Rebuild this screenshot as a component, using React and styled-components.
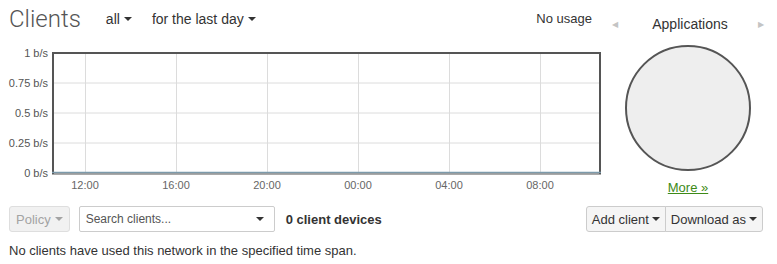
import React from 'react'
import styled, { createGlobalStyle } from 'styled-components'

const GlobalStyle = createGlobalStyle`
  body {
    margin: 0;
    background: #fff;
    font-family: "Liberation Sans", Arial, sans-serif;
    color: #333;
  }
`

const yTicks = [
  { label: '1 b/s', y: 53 },
  { label: '0.75 b/s', y: 83 },
  { label: '0.5 b/s', y: 113 },
  { label: '0.25 b/s', y: 143 },
  { label: '0 b/s', y: 173 },
]
const xTicks = [
  { label: '12:00', x: 85 },
  { label: '16:00', x: 176 },
  { label: '20:00', x: 267 },
  { label: '00:00', x: 358 },
  { label: '04:00', x: 449 },
  { label: '08:00', x: 540 },
]

function UsageChart() {
  // drawn in page coordinates, shifted up by the svg's top offset
  return (
    <ChartSvg width="605" height="158" viewBox="0 40 605 158">
      {yTicks.slice(1, 4).map(t => (
        <line key={t.label} x1="54" x2="600" y1={t.y} y2={t.y} stroke="#dcdcdc" strokeWidth="1" />
      ))}
      {xTicks.map(t => (
        <line key={t.label} x1={t.x + 0.5} x2={t.x + 0.5} y1="53" y2="173" stroke="#dcdcdc" strokeWidth="1" />
      ))}
      <path d="M53 174 L53 53 L600 53 L600 174" fill="none" stroke="#555" strokeWidth="2" />
      <line x1="52" x2="601" y1="172.5" y2="172.5" stroke="#7c9aab" strokeWidth="1.6" />
      <line x1="52" x2="601" y1="174" y2="174" stroke="#555" strokeWidth="1" />
      {yTicks.map(t => (
        <text key={t.label} x="48" y={t.y + 4} textAnchor="end" fontSize="11" fill="#555">{t.label}</text>
      ))}
      {xTicks.map(t => (
        <text key={t.label} x={t.x} y="189" textAnchor="middle" fontSize="11" fill="#666">{t.label}</text>
      ))}
    </ChartSvg>
  )
}

export default function App() {
  return (
    <Page>
      <GlobalStyle />
      <Top>
        <Main>
          <Header>
            <Title>Clients</Title>
            <Filter $gap={25}>all<Caret /></Filter>
            <Filter $gap={20}>for the last day<Caret /></Filter>
            <Usage>No usage</Usage>
          </Header>
          <UsageChart />
        </Main>
        <Side>
          <SideHead>
            <Arrow>◀</Arrow>
            <SideTitle>Applications</SideTitle>
            <Arrow>▶</Arrow>
          </SideHead>
          <Pie width="130" height="130" viewBox="0 0 130 130">
            <circle cx="65" cy="65" r="62" fill="#eee" stroke="#555" strokeWidth="2" />
          </Pie>
          <MoreLink href="#">More »</MoreLink>
        </Side>
      </Top>
      <Toolbar>
        <Button disabled>Policy<Caret /></Button>
        <SearchBox>
          <Placeholder>Search clients...</Placeholder>
          <Caret $dark />
        </SearchBox>
        <Count>0 client devices</Count>
        <Group>
          <Button $group>Add client<Caret /></Button>
          <Button $group>Download as<Caret /></Button>
        </Group>
      </Toolbar>
      <Message>No clients have used this network in the specified time span.</Message>
    </Page>
  )
}

const Page = styled.div`
  width: 777px;
  height: 264px;
  overflow: hidden;
`
const Top = styled.div`
  display: flex;
`
const Main = styled.div`
  width: 605px;
  display: flex;
  flex-direction: column;
`
const Header = styled.div`
  display: flex;
  align-items: center;
  height: 40px;
  padding-left: 9px;
  padding-bottom: 3px;
  box-sizing: border-box;
`
const Title = styled.h1`
  margin: 0;
  font-family: Roboto, "Liberation Sans", sans-serif;
  font-weight: 300;
  font-size: 24px;
  color: #555;
  line-height: 28px;
`
const Filter = styled.span`
  display: inline-flex;
  align-items: center;
  margin-left: ${p => p.$gap}px;
  font-size: 14px;
  color: #333;
  cursor: pointer;
`
const Usage = styled.span`
  margin-left: auto;
  margin-right: 13px;
  font-size: 13px;
  color: #333;
`
const Caret = styled.span`
  display: inline-block;
  width: 0;
  height: 0;
  margin-left: 4px;
  border-top: 4px solid ${p => (p.$dark ? '#333' : 'currentColor')};
  border-left: 4px solid transparent;
  border-right: 4px solid transparent;
`
const ChartSvg = styled.svg`
  display: block;
  font-family: "Liberation Sans", Arial, sans-serif;
`
const Side = styled.div`
  width: 172px;
  display: flex;
  flex-direction: column;
  align-items: center;
`
const SideHead = styled.div`
  display: flex;
  align-items: center;
  justify-content: space-between;
  width: 100%;
  padding: 14px 13px 0 7px;
  box-sizing: border-box;
  height: 34px;
`
const Arrow = styled.span`
  font-size: 8px;
  color: #c4c4c4;
`
const SideTitle = styled.span`
  font-size: 14px;
  color: #333;
  margin-left: 4px;
`
const Pie = styled.svg`
  display: block;
  margin-top: 9px;
  margin-right: 6px;
`
const MoreLink = styled.a`
  margin-top: 7px;
  margin-right: 6px;
  font-size: 13px;
  color: #3d8a17;
  text-decoration: underline;
`
const Toolbar = styled.div`
  display: flex;
  align-items: center;
  margin-top: 8px;
  padding: 0 14px 0 9px;
`
const Button = styled.button`
  display: inline-flex;
  align-items: center;
  height: 26px;
  padding: 0 ${p => (p.$group ? '5px' : '6px')};
  font-family: "Liberation Sans", Arial, sans-serif;
  font-size: 13px;
  color: ${p => (p.disabled ? '#a3a3a3' : '#333')};
  background: ${p => (p.disabled ? '#f1f1f1' : '#f5f5f5')};
  border: 1px solid ${p => (p.disabled ? '#dedede' : '#ccc')};
  border-radius: ${p => (p.$group ? '0' : '3px')};
  cursor: pointer;
  & > span {
    margin-left: ${p => (p.$group ? '3px' : '4px')};
  }
  & + & {
    margin-left: -1px;
  }
  &:first-child {
    border-top-left-radius: 3px;
    border-bottom-left-radius: 3px;
  }
  &:last-child {
    border-top-right-radius: 3px;
    border-bottom-right-radius: 3px;
  }
`
const SearchBox = styled.div`
  display: flex;
  align-items: center;
  justify-content: space-between;
  width: 196px;
  height: 26px;
  box-sizing: border-box;
  margin-left: 9px;
  padding: 0 10px 0 6px;
  border: 1px solid #ccc;
  border-radius: 2px;
  background: #fff;
`
const Placeholder = styled.span`
  font-size: 12px;
  color: #555;
`
const Count = styled.span`
  margin-left: 11px;
  font-size: 13px;
  font-weight: bold;
  color: #333;
`
const Group = styled.div`
  display: flex;
  margin-left: auto;
`
const Message = styled.p`
  margin: 11px 0 0 9px;
  font-size: 13px;
  color: #333;
`
